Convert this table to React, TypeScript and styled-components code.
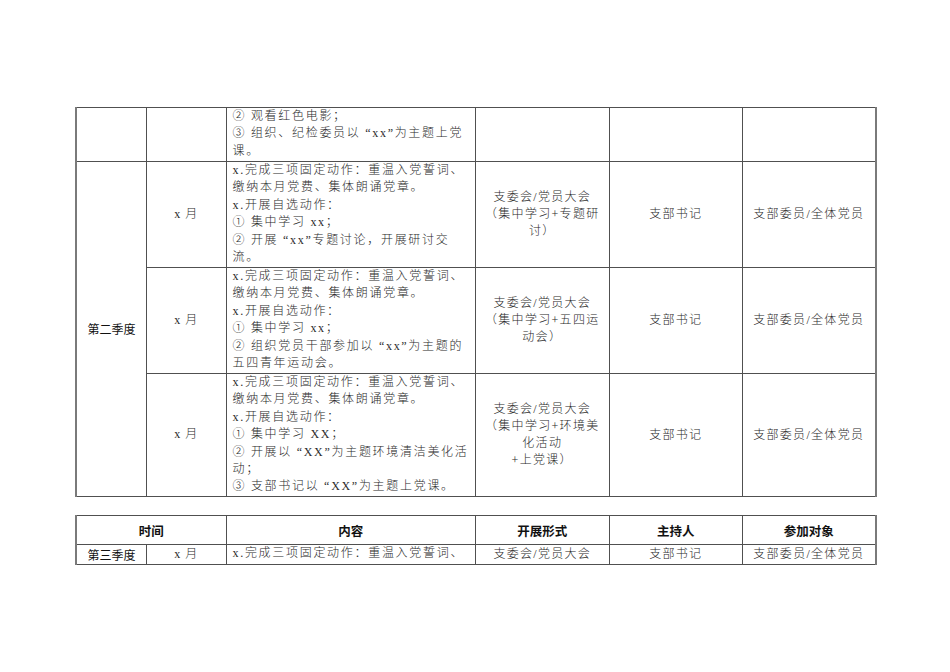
import React from "react";
import styled, { createGlobalStyle } from "styled-components";

const GlobalStyle = createGlobalStyle`
  html, body {
    margin: 0;
    padding: 0;
    background: #ffffff;
  }
  body {
    font-family: "Liberation Serif", "Noto Sans CJK SC", serif;
    color: #2b2b2b;
  }
`;

const Page = styled.div`
  width: 950px;
  padding: 107px 75px 0;
  box-sizing: border-box;
  display: flex;
  flex-direction: column;
  gap: 18px;
`;

const Table = styled.table`
  width: 800px;
  border-collapse: collapse;
  table-layout: fixed;
  border-left: 2px solid #7a7a7a;
  border-right: 2px solid #7a7a7a;
`;

const Col = styled.col<{ $w: number }>`
  width: ${(p) => p.$w}px;
`;

const Row = styled.tr<{ $h: number }>`
  height: ${(p) => p.$h}px;
`;

const BaseCell = styled.td`
  border: 1px solid #505050;
  padding: 0;
  font-size: 12px;
  line-height: 17.4px;
  font-weight: 300;
`;

const QuarterCell = styled(BaseCell)`
  text-align: center;
  vertical-align: middle;
  font-family: "Noto Sans CJK SC", sans-serif;
  font-weight: 400;
  color: #111111;
  letter-spacing: 0;
`;

const MonthCell = styled(BaseCell)`
  text-align: center;
  vertical-align: middle;
  letter-spacing: 1px;
`;

const ContentCell = styled(BaseCell)`
  text-align: left;
  vertical-align: top;
  padding-left: 6px;
  letter-spacing: 1.7px;
`;

const CenterCell = styled(BaseCell)`
  text-align: center;
  vertical-align: middle;
  letter-spacing: 1.3px;
  line-height: 17px;
`;

const HeadCell = styled.th`
  border: 1px solid #505050;
  padding: 0;
  font-family: "Noto Sans CJK SC", sans-serif;
  font-size: 12.5px;
  font-weight: 700;
  color: #111111;
  text-align: center;
  vertical-align: middle;
`;

const Line = styled.div`
  white-space: nowrap;
`;

type Item = {
  month: string;
  content: string[];
  form: string[];
  height: number;
};

const items: Item[] = [
  {
    month: "x 月",
    height: 106,
    content: [
      "x.完成三项固定动作：重温入党誓词、",
      "缴纳本月党费、集体朗诵党章。",
      "x.开展自选动作：",
      "① 集中学习 xx；",
      "② 开展 “xx”专题讨论，开展研讨交",
      "流。",
    ],
    form: ["支委会/党员大会", "（集中学习+专题研", "讨）"],
  },
  {
    month: "x 月",
    height: 106,
    content: [
      "x.完成三项固定动作：重温入党誓词、",
      "缴纳本月党费、集体朗诵党章。",
      "x.开展自选动作：",
      "① 集中学习 xx；",
      "② 组织党员干部参加以 “xx”为主题的",
      "五四青年运动会。",
    ],
    form: ["支委会/党员大会", "（集中学习+五四运", "动会）"],
  },
  {
    month: "x 月",
    height: 123,
    content: [
      "x.完成三项固定动作：重温入党誓词、",
      "缴纳本月党费、集体朗诵党章。",
      "x.开展自选动作：",
      "① 集中学习 XX；",
      "② 开展以 “XX”为主题环境清洁美化活",
      "动；",
      "③ 支部书记以 “XX”为主题上党课。",
    ],
    form: ["支委会/党员大会", "（集中学习+环境美", "化活动", "+上党课）"],
  },
];

const Lines = ({ lines }: { lines: string[] }) => (
  <>
    {lines.map((l, i) => (
      <Line key={i}>{l}</Line>
    ))}
  </>
);

const Cols = () => (
  <colgroup>
    <Col $w={70.5} />
    <Col $w={79.5} />
    <Col $w={249.5} />
    <Col $w={133.5} />
    <Col $w={133.5} />
    <Col $w={133} />
  </colgroup>
);

const App = () => {
  return (
    <>
      <GlobalStyle />
      <Page>
        <Table>
          <Cols />
          <tbody>
            <Row $h={54}>
              <QuarterCell />
              <MonthCell />
              <ContentCell>
                <Lines
                  lines={[
                    "② 观看红色电影；",
                    "③ 组织、纪检委员以 “xx”为主题上党",
                    "课。",
                  ]}
                />
              </ContentCell>
              <CenterCell />
              <CenterCell />
              <CenterCell />
            </Row>
            {items.map((it, i) => (
              <Row $h={it.height} key={i}>
                {i === 0 && <QuarterCell rowSpan={3}>第二季度</QuarterCell>}
                <MonthCell>{it.month}</MonthCell>
                <ContentCell>
                  <Lines lines={it.content} />
                </ContentCell>
                <CenterCell>
                  <Lines lines={it.form} />
                </CenterCell>
                <CenterCell>支部书记</CenterCell>
                <CenterCell>支部委员/全体党员</CenterCell>
              </Row>
            ))}
          </tbody>
        </Table>

        <Table>
          <Cols />
          <thead>
            <Row $h={29}>
              <HeadCell colSpan={2}>时间</HeadCell>
              <HeadCell>内容</HeadCell>
              <HeadCell>开展形式</HeadCell>
              <HeadCell>主持人</HeadCell>
              <HeadCell>参加对象</HeadCell>
            </Row>
          </thead>
          <tbody>
            <Row $h={20}>
              <QuarterCell>第三季度</QuarterCell>
              <MonthCell>x 月</MonthCell>
              <ContentCell>
                <Line>x.完成三项固定动作：重温入党誓词、</Line>
              </ContentCell>
              <CenterCell>支委会/党员大会</CenterCell>
              <CenterCell>支部书记</CenterCell>
              <CenterCell>支部委员/全体党员</CenterCell>
            </Row>
          </tbody>
        </Table>
      </Page>
    </>
  );
};

export default App;
